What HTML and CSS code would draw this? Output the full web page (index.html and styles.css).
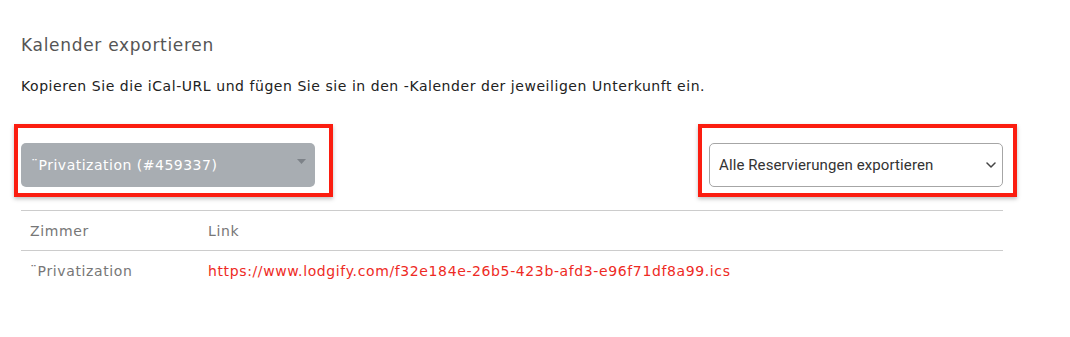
FILE: index.html
```html
<!DOCTYPE html>
<html lang="de">
<head>
<meta charset="utf-8">
<title>Kalender exportieren</title>
<link rel="stylesheet" href="styles.css">
</head>
<body>
<div class="page">
  <h2 class="title">Kalender exportieren</h2>
  <p class="desc">Kopieren Sie die iCal-URL und fügen Sie sie in den -Kalender der jeweiligen Unterkunft ein.</p>
  <div class="controls">
    <div class="mark mark-left">
      <div class="prop-select">
        <span class="prop-label">¨Privatization (#459337)</span>
        <svg class="caret" width="9" height="5" viewBox="0 0 9 5"><path d="M0 0h9L4.5 5z" fill="#7d8288"/></svg>
      </div>
    </div>
    <div class="mark mark-right">
      <div class="res-select">
        <span class="res-label">Alle Reservierungen exportieren</span>
        <svg class="chev" width="10" height="6" viewBox="0 0 10 6"><path d="M1 1l4 4 4-4" fill="none" stroke="#444" stroke-width="1.5" stroke-linecap="round" stroke-linejoin="round"/></svg>
      </div>
    </div>
  </div>
  <table class="links">
    <thead>
      <tr><th class="col-room">Zimmer</th><th>Link</th></tr>
    </thead>
    <tbody>
      <tr><td class="col-room">¨Privatization</td><td><a class="ical" href="#">https://www.lodgify.com/f32e184e-26b5-423b-afd3-e96f71df8a99.ics</a></td></tr>
    </tbody>
  </table>
</div>
</body>
</html>
```

FILE: styles.css
```css
html, body {
  margin: 0;
  padding: 0;
  background: #ffffff;
}
body {
  font-family: "DejaVu Sans", "Liberation Sans", sans-serif;
  color: #333;
}
.page {
  width: 982px;
  padding: 33px 0 0 21px;
}
.title {
  margin: 0;
  font-size: 17px;
  font-weight: 400;
  letter-spacing: 0.7px;
  line-height: 24px;
  color: #555;
}
.desc {
  margin: 19px 0 0;
  font-size: 14px;
  letter-spacing: 0.55px;
  line-height: 20px;
  color: #222;
}
.controls {
  display: flex;
  justify-content: space-between;
  margin-top: 28px;
}
.mark {
  border: 4px solid #fb1d10;
  box-shadow: 0 2px 4px rgba(0,0,0,0.25);
}
.mark-left {
  margin-left: -7px;
  padding: 15px 14px 6px 3px;
}
.mark-right {
  margin-right: -14px;
  padding: 15px 10px 6px 7px;
}
.prop-select {
  width: 294px;
  height: 44px;
  box-sizing: border-box;
  background: #a8adb2;
  border-radius: 5px;
  display: flex;
  align-items: center;
  justify-content: space-between;
  padding: 0 9px 0 10px;
}
.prop-label {
  color: #fff;
  font-size: 14px;
  letter-spacing: 0.5px;
}
.caret {
  align-self: flex-start;
  margin-top: 16px;
}
.res-select {
  width: 294px;
  height: 44px;
  box-sizing: border-box;
  border: 1px solid #a6a6a6;
  border-radius: 5px;
  display: flex;
  align-items: center;
  justify-content: space-between;
  padding: 0 6px 0 9px;
  font-family: Roboto, "Liberation Sans", sans-serif;
}
.res-label {
  font-size: 15px;
  letter-spacing: 0.1px;
  color: #333;
}
.links {
  width: 982px;
  margin-top: 13px;
  border-collapse: collapse;
  font-size: 14px;
  letter-spacing: 0.62px;
}
.links th, .links td {
  text-align: left;
  font-weight: 400;
  color: #777;
  padding: 0 0 0 9px;
  height: 39px;
}
.links thead tr {
  border-top: 1px solid #cccccc;
  border-bottom: 1px solid #cccccc;
}
.col-room {
  width: 169px;
}
.ical {
  color: #ee2a24;
  text-decoration: none;
}
```
